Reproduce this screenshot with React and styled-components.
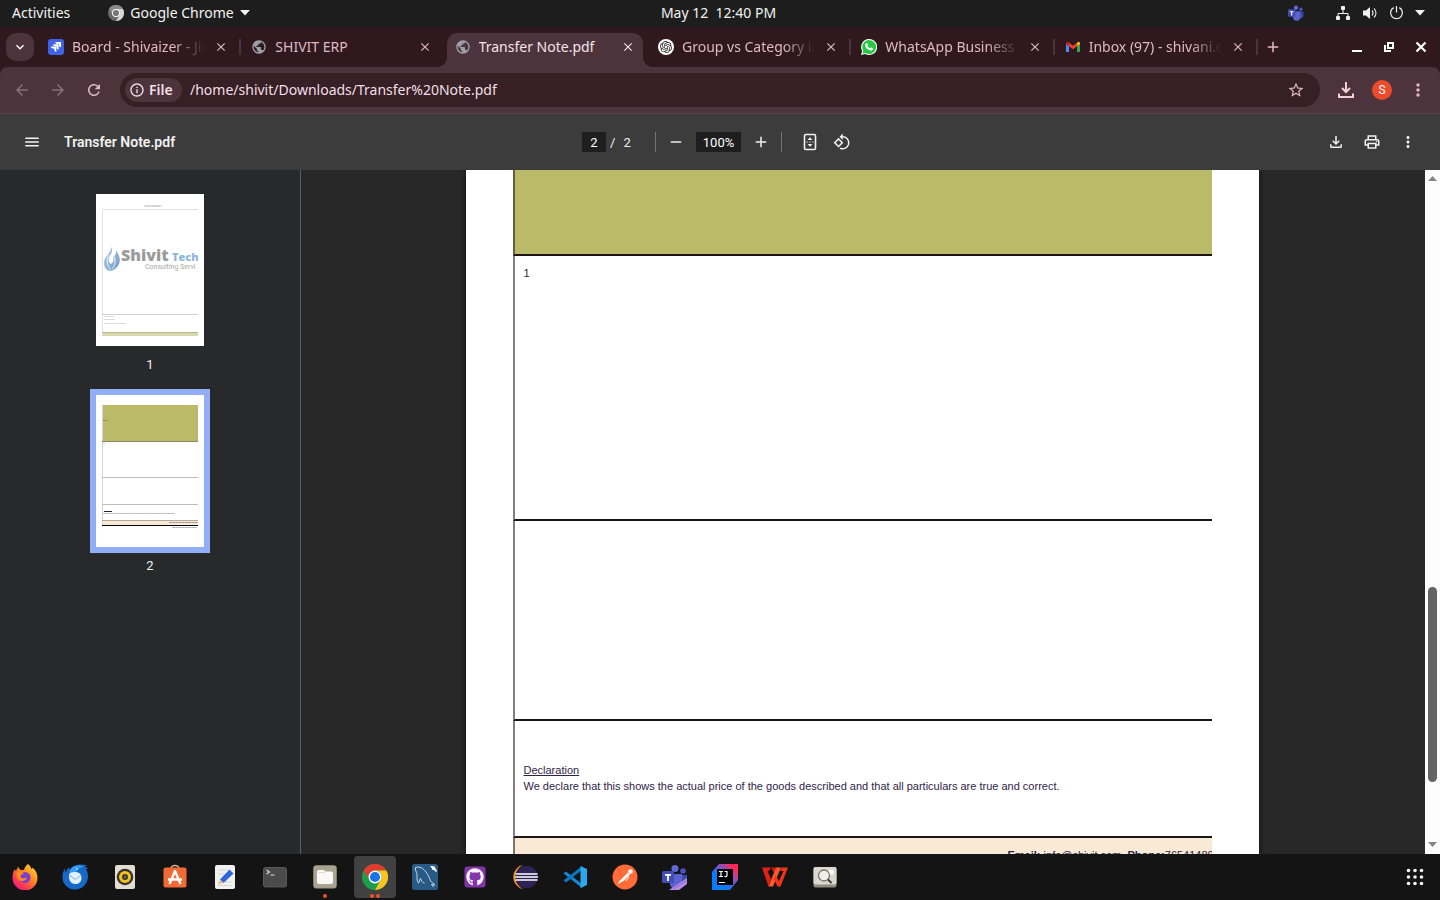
import React from 'react';
import styled, { createGlobalStyle } from 'styled-components';
import {
  MdMenu, MdRemove, MdAdd, MdMoreVert, MdOutlineFileDownload, MdOutlinePrint,
  MdRotate90DegreesCcw, MdArrowBack, MdArrowForward, MdRefresh, MdStarBorder,
  MdInfoOutline, MdClose, MdPublic, MdKeyboardArrowDown,
} from 'react-icons/md';
import { FaGithub } from 'react-icons/fa';
import { SiOpenai } from 'react-icons/si';

const c = {
  system: '#1d1d1d',
  strip: '#30181f',
  toolbar: '#4d343c',
  omnibox: '#361f25',
  pink: '#dfb9c3',
  pdfBar: '#3c3c3c',
  sidebar: '#28292b',
  canvas: '#282828',
  olive: '#bbba68',
  beige: '#f8ead5',
  ink: '#1c1419',
  text: '#30244a',
  dock: '#141414',
};

const GlobalStyle = createGlobalStyle`
  * { box-sizing: border-box; }
  body { margin: 0; background: ${c.dock}; }
  button, input {
    font: inherit; color: inherit; border: 0; padding: 0; margin: 0;
    background: transparent; outline: none; min-width: 0;
  }
  svg { display: block; flex: none; }
  h1, h2, p { margin: 0; font-weight: inherit; font-size: inherit; }
`;

const Desktop = styled.div`
  height: 100vh;
  display: flex;
  flex-direction: column;
  overflow: hidden;
  font-family: 'Noto Sans', 'Open Sans', sans-serif;
  font-size: 14px;
`;

/* ---------- system bar ---------- */
const SystemBar = styled.header`
  height: 27px;
  flex: none;
  display: grid;
  grid-template-columns: 1fr auto 1fr;
  align-items: center;
  padding: 0 15px 2px 12px;
  background: ${c.system};
  color: #f2f2f2;
`;
const SystemGroup = styled.div`
  display: flex;
  align-items: center;
  justify-content: ${(p) => (p.$end ? 'flex-end' : 'flex-start')};
  gap: ${(p) => p.$gap}px;
`;
const SystemButton = styled.button`
  display: flex;
  align-items: center;
  gap: 6px;
  white-space: pre;
`;
const TrayGap = styled.span`
  width: 9px;
`;

/* ---------- tabs ---------- */
const TabStrip = styled.nav`
  height: 40px;
  flex: none;
  display: flex;
  align-items: center;
  padding: 0 3px 0 6px;
  background: ${c.strip};
  color: ${c.pink};
`;
const TabSearch = styled.button`
  width: 28px;
  height: 28px;
  flex: none;
  margin-right: 6px;
  border-radius: 10px;
  background: ${c.toolbar};
  color: #fff;
  display: flex;
  align-items: center;
  justify-content: center;
`;
const TabCell = styled.div`
  flex: 1;
  min-width: 0;
  height: 40px;
  display: flex;
  align-items: center;
`;
const Tab = styled.div`
  position: relative;
  flex: 1;
  min-width: 0;
  display: flex;
  align-items: center;
  gap: 8px;
  padding: 0 7px 0 8px;
  height: ${(p) => (p.$active ? 34 : 28)}px;
  align-self: ${(p) => (p.$active ? 'flex-end' : 'center')};
  padding-bottom: ${(p) => (p.$active ? 6 : 0)}px;
  border-radius: 10px 10px 0 0;
  background: ${(p) => (p.$active ? c.toolbar : 'transparent')};
  color: ${(p) => (p.$active ? '#f4e3e8' : c.pink)};
  &::before, &::after {
    content: '';
    display: ${(p) => (p.$active ? 'block' : 'none')};
    position: absolute;
    bottom: 0;
    width: 10px;
    height: 10px;
  }
  &::before { left: -10px; background: radial-gradient(circle at 0 0, transparent 10px, ${c.toolbar} 10px); }
  &::after { right: -10px; background: radial-gradient(circle at 100% 0, transparent 10px, ${c.toolbar} 10px); }
`;
const TabTitle = styled.button`
  flex: 1;
  min-width: 0;
  overflow: hidden;
  white-space: nowrap;
  text-align: left;
  line-height: 20px;
  mask-image: ${(p) => (p.$fade ? 'linear-gradient(to right, #000 calc(100% - 32px), transparent)' : 'none')};
`;
const TabSeparator = styled.span`
  width: 2px;
  height: 16px;
  flex: none;
  margin: 0 2px 0 3px;
  background: ${(p) => (p.$hidden ? 'transparent' : c.toolbar)};
`;
const TabClose = styled.button`
  flex: none;
  width: 16px;
  height: 16px;
  display: flex;
  align-items: center;
  justify-content: center;
`;
const StripButton = styled.button`
  flex: none;
  width: ${(p) => (p.$window ? 32 : 26)}px;
  height: 28px;
  color: ${(p) => (p.$window ? '#fff' : 'inherit')};
  display: flex;
  align-items: center;
  justify-content: center;
`;
const WindowButtons = styled.div`
  display: flex;
  margin-left: 55px;
`;

/* ---------- browser toolbar ---------- */
const BrowserBarBack = styled.div`
  flex: none;
  background: ${c.strip};
`;
const BrowserBar = styled.div`
  height: 47px;
  display: flex;
  align-items: center;
  padding: 0 4px;
  background: ${c.toolbar};
  border-radius: 8px 8px 0 0;
  border-bottom: 1px solid #54484b;
  color: ${c.pink};
`;
const BarButton = styled.button`
  width: 36px;
  height: 34px;
  flex: none;
  display: flex;
  align-items: center;
  justify-content: center;
  color: ${(p) => (p.$faded ? '#86707a' : 'inherit')};
`;
const Omnibox = styled.div`
  flex: 1;
  height: 34px;
  display: flex;
  align-items: center;
  gap: 8px;
  margin: 0 8px;
  padding: 0 15px 0 5px;
  border-radius: 17px;
  background: ${c.omnibox};
`;
const SchemeChip = styled.button`
  height: 24px;
  width: 57px;
  flex: none;
  display: flex;
  align-items: center;
  gap: 4px;
  padding-left: 4px;
  border-radius: 12px;
  background: ${c.toolbar};
  color: #f4dfe5;
  font-weight: 600;
  line-height: 20px;
`;
const Address = styled.input`
  flex: 1;
  height: 22px;
  align-self: flex-start;
  margin-top: 5px;
  color: #f4dfe5;
`;
const Avatar = styled.span`
  width: 20px;
  height: 20px;
  border-radius: 50%;
  background: #ee4a2c;
  color: #fff;
  font: 12px/20px Roboto, sans-serif;
  text-align: center;
`;

/* ---------- pdf viewer ---------- */
const PdfBar = styled.div`
  height: 56px;
  flex: none;
  display: grid;
  grid-template-columns: 1fr auto 1fr;
  align-items: center;
  padding: 0 14px;
  background: ${c.pdfBar};
  color: #f1f1f1;
  font-family: Roboto, sans-serif;
`;
const PdfGroup = styled.div`
  display: flex;
  align-items: center;
  justify-content: ${(p) => (p.$end ? 'flex-end' : 'flex-start')};
`;
const PdfTitle = styled.h1`
  margin-left: 14px;
  font-weight: 600;
`;
const PdfButton = styled.button`
  width: ${(p) => p.$w || 36}px;
  height: 36px;
  display: flex;
  align-items: center;
  justify-content: center;
`;
const PdfField = styled.input`
  width: ${(p) => p.$w}px;
  height: 20px;
  background: #1e1e1e;
  color: #fff;
  font-size: 13px;
  text-align: center;
`;
const PageCount = styled.span`
  display: flex;
  gap: 8px;
  width: 49px;
  padding-left: 4px;
  font-size: 13px;
`;
const PdfDivider = styled.span`
  width: 1px;
  height: 20px;
  margin-right: ${(p) => p.$after || 0}px;
  background: #747474;
`;
const Viewer = styled.main`
  flex: 1;
  min-height: 0;
  display: flex;
`;
const Sidebar = styled.aside`
  width: 301px;
  flex: none;
  display: flex;
  flex-direction: column;
  align-items: center;
  padding-top: 24px;
  background: ${c.sidebar};
  border-right: 1px solid #5e5e5e;
  color: #f1f1f1;
  font: 13px/16px Roboto, sans-serif;
`;
const Thumb = styled.button`
  display: flex;
  flex-direction: column;
  align-items: center;
  margin-bottom: ${(p) => (p.$selected ? 0 : 16)}px;
  span { margin-top: ${(p) => (p.$selected ? 5 : 11)}px; }
`;
const ThumbFrame = styled.div`
  background: #fff;
  border: ${(p) => (p.$selected ? 6 : 0)}px solid #93aef9;
`;
const Canvas = styled.section`
  flex: 1;
  min-width: 0;
  display: flex;
  justify-content: center;
  padding-right: 2px;
  background: ${c.canvas};
  overflow: hidden;
`;
const Paper = styled.article`
  width: 793px;
  display: flex;
  padding: 0 47px;
  background: #fff;
  box-shadow: 0 0 6px rgba(0, 0, 0, 0.6);
  color: ${c.text};
  font: 11px/16px 'Liberation Sans', Arial, sans-serif;
`;
const PaperFrame = styled.div`
  flex: 1;
  min-width: 0;
  display: flex;
  flex-direction: column;
`;
const paperEdge = '2px solid rgba(28, 20, 25, 0.55)';
const PaperBlock = styled.section`
  flex: none;
  height: ${(p) => p.$h}px;
  padding: ${(p) => p.$top || 0}px 0 0 9px;
  border-left: ${paperEdge};
  border-bottom: 2px solid ${c.ink};
  background: ${(p) => p.$fill || 'transparent'};
`;
const Underlined = styled.h2`
  text-decoration: underline;
`;
const PaperFooter = styled.footer`
  flex: 1;
  min-height: 0;
  overflow: hidden;
  display: flex;
  justify-content: flex-end;
  padding-top: 9px;
  background: ${c.beige};
  border-left: ${paperEdge};
`;
const Contact = styled.p`
  width: 204px;
  overflow: hidden;
  white-space: nowrap;
`;
const ScrollTrack = styled.div`
  width: 15px;
  flex: none;
  display: flex;
  flex-direction: column;
  align-items: center;
  padding: 6px 0 7px;
  background: #fcfcfc;
`;
const ScrollSpace = styled.div`
  flex: ${(p) => p.$grow};
`;
const ScrollThumb = styled.div`
  flex: 195;
  width: 9px;
  border-radius: 5px;
  background: #636363;
`;

/* ---------- dock ---------- */
const Dock = styled.footer`
  height: 46px;
  flex: none;
  display: flex;
  align-items: center;
  gap: 8px;
  padding: 0 4px;
  background: ${c.dock};
`;
const DockItem = styled.button`
  position: relative;
  width: 42px;
  height: 42px;
  flex: none;
  display: flex;
  align-items: center;
  justify-content: center;
  border-radius: 4px;
  background: ${(p) => (p.$active ? '#414141' : 'transparent')};
  margin-left: ${(p) => (p.$last ? 'auto' : 0)};
`;
const RunDots = styled.span`
  position: absolute;
  left: 0;
  right: 0;
  bottom: 0;
  display: flex;
  justify-content: center;
  gap: 2px;
  i { width: 4px; height: 4px; border-radius: 50%; background: #e95420; }
`;

/* ---------- drawings ---------- */
const S = ({ s = 26, v = 26, children }) => (
  <svg width={s} height={s} viewBox={`0 0 ${v} ${v}`} aria-hidden="true">{children}</svg>
);
const Caret = () => (
  <svg width="10" height="6" viewBox="0 0 10 6" aria-hidden="true"><path d="M0 0h10L5 5.5z" fill="#f2f2f2" /></svg>
);
const Chrome = ({ s = 26, mono }) => {
  const k = mono ? ['#8a8a8a', '#d4d4d4', '#6b6b6b', '#777'] : ['#e33b2e', '#fcc31e', '#1e9e4a', '#1a73e8'];
  return (
    <S s={s} v={48}>
      <circle cx="24" cy="24" r="24" fill={k[2]} />
      <path d="M3.2 12A24 24 0 0 1 44.8 12H24a12 12 0 0 0-10.4 18z" fill={k[0]} />
      <path d="M44.8 12A24 24 0 0 1 24 48l10.4-18A12 12 0 0 0 24 12z" fill={k[1]} />
      <circle cx="24" cy="24" r="12" fill="#fff" />
      <circle cx="24" cy="24" r="9.3" fill={k[3]} />
    </S>
  );
};
const Jira = () => (
  <S s={16} v={16}>
    <rect width="16" height="16" rx="3" fill="#3f63e6" />
    <path d="M7.2 3H13v5.6a2.3 2.3 0 0 1-2-2.3V5H9.6A2.3 2.3 0 0 1 7.2 3zM5 5.3h5.6v5.5a2.3 2.3 0 0 1-2-2.3V7.3H7.3A2.2 2.2 0 0 1 5 5.3zM2.8 7.6h5.5V13a2.2 2.2 0 0 1-2-2.2V9.6H5A2.2 2.2 0 0 1 2.8 7.6z" fill="#fff" />
  </S>
);
const OpenAi = () => (
  <S s={16} v={16}>
    <circle cx="8" cy="8" r="8" fill="#fff" />
    <g transform="translate(2 2)" color="#222"><SiOpenai size={12} /></g>
  </S>
);
const WhatsApp = () => (
  <S s={16} v={16}>
    <path d="M8 0a8 8 0 1 1-3.7 15L0 16l1.1-4.1A8 8 0 0 1 8 0z" fill="#fff" />
    <path d="M8 1a7 7 0 1 1-3.5 13L1.5 14.7l.8-3A7 7 0 0 1 8 1z" fill="#25c943" />
    <path d="M5.2 4.2c.5-.5 1-.3 1.2.2l.5 1.2c.1.4-.6.9-.5 1.2.6 1.2 1.5 2 2.7 2.5.4.1.9-.9 1.3-.7l1.3.7c.4.2.2 1.3-.3 1.7-1 .9-2.6.6-4.2-.4C5.5 9.5 4 7.600 4.200 6c.1-.8.5-1.300 1-1.800z" fill="#fff" />
  </S>
);
const Gmail = () => (
  <S s={16} v={16}>
    <path d="M1 4.5v8.5h3V7.2z" fill="#4c8bf5" />
    <path d="M15 4.5v8.5h-3V7.2z" fill="#2fa84f" />
    <path d="M12 7.2V3.7l1-.7a1.3 1.3 0 0 1 2 1v1z" fill="#fbbc05" />
    <path d="M1 5V4a1.3 1.3 0 0 1 2-1l1 .7v3.5z" fill="#c5221f" />
    <path d="M4 3.7l4 3 4-3v3.5l-4 3-4-3z" fill="#ea4335" />
  </S>
);
const Teams = ({ s = 26, badge }) => (
  <S s={s} v={26}>
    <circle cx="21" cy="7" r="2.8" fill="#4b53bc" />
    <path d="M18 11h7v7a4 4 0 0 1-6 3z" fill="#3f48ad" />
    <circle cx="13" cy="4.5" r="3.5" fill="#6169d6" />
    <path d="M8 10h12v9a6 6 0 0 1-12 1z" fill="#5a63cf" />
    <rect x="0" y="7" width="12" height="12" rx="1.5" fill="#434bb5" />
    <path d="M3 10h6v1.7H6.9V17H5.1v-5.3H3z" fill="#fff" />
    {badge && <path d="M7 26L25 14v6l-8 6z" fill="#b58be8" />}
    {badge && <path d="M12 24.5L24 17" stroke="#8a5fc9" strokeWidth="1.3" strokeDasharray="1.5 1" />}
  </S>
);
const Network = () => (
  <S s={16} v={16}>
    <rect x="6" y="1" width="4" height="4" rx="1" fill="#f2f2f2" />
    <rect x="1" y="11" width="4" height="4" rx="1" fill="#f2f2f2" />
    <rect x="11" y="11" width="4" height="4" rx="1" fill="#f2f2f2" />
    <path d="M8 5v3.500M3 11V8.500h10V11" fill="none" stroke="#f2f2f2" />
  </S>
);
const Volume = () => (
  <S s={16} v={16}><path d="M1 5.5h3L8 2v12l-4-3.500H1z" fill="#f2f2f2" /><path d="M10 5.500c1.300 1.500 1.300 3.500 0 5M12 3.500c2.600 2.500 2.600 6.500 0 9" fill="none" stroke="#d8d8d8" strokeWidth="1.2" /></S>
);
const Power = () => (
  <S s={15} v={16}><path d="M5 2.8a6.3 6.3 0 1 0 6 0M8 1v7" fill="none" stroke="#f2f2f2" strokeWidth="1.3" /></S>
);
const Fit = () => (
  <S s={20} v={20}>
    <rect x="4.5" y="2.5" width="11" height="15" rx="1.3" fill="none" stroke="#f1f1f1" strokeWidth="1.6" />
    <path d="M7.5 8L10 5.3 12.5 8zM7.5 12L10 14.7 12.5 12z" fill="#f1f1f1" />
    <path d="M6.5 10h1.2M9.4 10h1.2M12.3 10h1.2" stroke="#f1f1f1" />
  </S>
);
const TrayDownload = () => (
  <S s={18} v={18}><path d="M9 1v9.500M5 7l4 4 4-4M2 12.500V16h14v-3.500" fill="none" stroke="#f6cfd5" strokeWidth="2" /></S>
);
const Firefox = () => (
  <S>
    <defs>
      <linearGradient id="ff" x1="1" y1="0" x2=".2" y2="1"><stop offset="0" stopColor="#ffe83a" /><stop offset=".45" stopColor="#ff8a1c" /><stop offset=".8" stopColor="#ff3556" /><stop offset="1" stopColor="#e3148c" /></linearGradient>
    </defs>
    <path d="M16 0c2 2 3 3 3.500 5 1-.5 1-1 1-1.500 3 2.500 5 6 5 10.500A12.500 12.500 0 0 1 .5 14C.3 10 1.500 7 3 5c0 .8.200 1.500.5 2C5 5.500 5.500 4 6 2.500c.5 1.500 1.500 2.800 3 3.500h3c.5-2.500 2-4.500 4-6z" fill="url(#ff)" />
    <circle cx="13" cy="13.500" r="5.500" fill="#7a3fd0" />
    <path d="M5 8c3-1 5 0 7 1.500-1.500 1-3 1-3.500 2.500-.3 1.500 1 2.500 3 2.500s2-1 3.500-1c-1 3-4 4-7 3-2.500-1-4-4-3-8.500z" fill="#ff8f1d" />
  </S>
);
const Thunderbird = () => (
  <S>
    <path d="M8 5c3-4 10-5.500 17-3.500l-2.500 1c1.500.5 2.500 1.500 3.500 2.500h-2c2.500 4 2.500 9.500.5 13.500C22 23.500 17 26 12 25.500 5 25 0 19 .5 12c.2-3 1-5.500 2.500-7.500 0 2 .2 3 .7 4L6.500 3c0 1.500.5 1.500 1.500 2z" fill="#1769c9" />
    <path d="M10 4c3-3 8-3 11.500-1-4 .2-6.500 2-7.500 5l-6 3C7 8 8 6 10 4z" fill="#3a9df0" />
    <path d="M7 11c0-2 3-3 6-3 4 0 6.500 2 6.500 6s-3 6-6 6c-4 0-7-3-6.500-9z" fill="#e4f1ff" />
    <path d="M7.500 11l5.500 4.500 6-4" fill="none" stroke="#9cc5ee" strokeWidth="1.2" />
    <circle cx="15" cy="5" r=".8" fill="#fff" />
  </S>
);
const Rhythmbox = () => (
  <S>
    <rect x="3" y="1" width="20" height="24" rx="2" fill="#e2ded2" />
    <circle cx="13" cy="13" r="8.3" fill="#35332f" /><circle cx="13" cy="13" r="6" fill="#f3c21b" /><circle cx="13" cy="13" r="3" fill="#333" /><circle cx="13" cy="13" r="1.5" fill="#6b6452" />
  </S>
);
const Software = () => (
  <S>
    <path d="M8.500 6c0-6 9-6 9 0" fill="none" stroke="#d9b18b" strokeWidth="1.5" />
    <rect x="1.5" y="3.5" width="23" height="20" rx="2" fill="#f26a35" />
    <path d="M7.500 20L13 7l5.500 13M6 15.500h14" fill="none" stroke="#fff" strokeWidth="2.3" strokeLinejoin="round" />
  </S>
);
const Editor = () => (
  <S>
    <rect x="3" y="1" width="20" height="24" rx="2" fill="#f1f1f1" />
    <path d="M6 6h10M6 10h7M6 18h14M6 21.500h14" stroke="#d7d7d7" />
    <path d="M8 15.500L17.500 5.500l4 4L11.500 19z" fill="#2f66dc" /><path d="M8 15.500l3.500 3.500L6 20.500z" fill="#e8bd8b" />
  </S>
);
const Terminal = () => (
  <S>
    <rect x="1.5" y="3.5" width="23" height="19.5" rx="2" fill="#4b4b4b" stroke="#6a6a6a" strokeWidth=".7" />
    <path d="M4.500 6l3 2-3 2M8.500 11h4" fill="none" stroke="#ddd" strokeWidth="1.1" />
  </S>
);
const Files = () => (
  <S>
    <rect x="1.5" y="1.5" width="23" height="23" rx="2.5" fill="#9c9584" /><rect x="1.5" y="1.5" width="23" height="22" rx="2.5" fill="#aaa392" />
    <path d="M5 8a2 2 0 0 1 2-2h5l1 1.500h6a2 2 0 0 1 2 2V18a2 2 0 0 1-2 2H7a2 2 0 0 1-2-2z" fill="#faf9f6" /><path d="M6 8.500h7" stroke="#ddd" />
  </S>
);
const Workbench = () => (
  <S>
    <rect width="26" height="26" rx="2.5" fill="#275a85" />
    <path d="M3.500 3.500c4-1.500 8 1 10.500 4.500 2.500 3.500 3.500 6 4.500 9l4.500 4-3.500-.5 2 2.500M3.500 3.500C2.500 6 5 8 5 10.500s-.5 6 1.500 8.500c1.500-.5.500-3 2-4.500 1 2 2 4.500 4 4.500" fill="none" stroke="#dbe7f0" strokeWidth=".9" />
    <path d="M18 2l2 2.500L20.500 6 22 6l2 2 1-1-1.500-2.500-1-2L20 2z" fill="#fff" />
  </S>
);
const GitHubDesktop = () => (
  <S>
    <rect x="2.5" y="2.5" width="21" height="21" rx="3" fill="#8334a9" />
    <g transform="translate(4 4)" color="#f4f0f7"><FaGithub size={18} /></g>
  </S>
);
const Eclipse = () => (
  <S>
    <path d="M11 .8a12.500 12.500 0 0 0 0 24.400 14 14 0 0 1 0-24.400z" fill="#f7941e" />
    <circle cx="14.5" cy="13" r="11.3" fill="#2c2255" />
    <path d="M3.500 10h22M3 13h23M3.500 16h22" stroke="#fff" strokeWidth="1.6" />
  </S>
);
const VsCode = () => (
  <S>
    <path d="M1.500 9.500L4 7.500 20 20v4z" fill="#1387d0" />
    <path d="M1.500 16.500L4 18.500 20 6V2z" fill="#0a78bf" />
    <path d="M18.500 2L25 5v16l-6.500 3z" fill="#2aa7ee" />
  </S>
);
const Postman = () => (
  <S>
    <circle cx="13" cy="13" r="12.5" fill="#ff6c37" />
    <circle cx="18.500" cy="7.500" r="2.300" fill="#fff" />
    <path d="M16 8.500l2 2-6 6-6.500 4 2-3.500z" fill="#fff" /><path d="M15.500 12l1 2-3 3" fill="none" stroke="#fff" />
  </S>
);
const Idea = () => (
  <S>
    <defs><linearGradient id="ij" x1="0" y1="1" x2="1" y2="0"><stop offset=".35" stopColor="#087cfa" /><stop offset=".6" stopColor="#7a55c9" /><stop offset=".85" stopColor="#fe2857" /></linearGradient></defs>
    <path d="M7 0h19v16l-8 10H0V8z" fill="url(#ij)" />
    <rect x="5" y="5" width="16" height="16" fill="#000" />
    <path d="M7 7.500h4M9 7.500v5M7 12.500h4M12.500 7.500H15v4c0 1.200-1.500 1.500-2.500.8M7 18.500h6" fill="none" stroke="#fff" strokeWidth="1.2" />
  </S>
);
const Wps = () => (
  <S>
    <path d="M0 3.500h9l-2 3.500H5.500L9 15l-2.500 7.500z" fill="#e12016" />
    <path d="M9 3.500h5l1 3.500-2 4z" fill="#c81811" />
    <path d="M6.500 22.500L14 3.500h5L11 22.500z" fill="#ff5a2b" />
    <path d="M13.500 11l3.500 6L21.500 7H18l1.500-3.500H26L18.500 22.500h-3L12 15z" fill="#f03419" />
  </S>
);
const ImageViewer = () => (
  <S>
    <rect x="1.5" y="3" width="23" height="20.5" rx="2" fill="#8e8c83" /><rect x="1.5" y="3" width="23" height="17.5" rx="2" fill="#d9d8cf" />
    <circle cx="19" cy="8" r="2.6" fill="#fff" />
    <circle cx="12" cy="11.5" r="5.5" fill="#efefea" stroke="#77766e" strokeWidth="1.3" /><path d="M16 15.500l3.500 3.500" stroke="#333" strokeWidth="1.8" />
  </S>
);
const AppGrid = () => (
  <S s={18} v={18}>
    {[2.5, 9, 15.5].flatMap((y) => [2.5, 9, 15.5].map((x) => <circle key={`${x}-${y}`} cx={x} cy={y} r="1.8" fill="#f2f2f2" />))}
  </S>
);

const ThumbOne = () => (
  <svg width="108" height="152" viewBox="0 0 108 152" aria-hidden="true">
    <defs>
      <clipPath id="sheet"><rect x="6" y="0" width="96" height="152" /></clipPath>
      <linearGradient id="flame" x1="0" y1="0" x2="1" y2="1"><stop offset="0" stopColor="#b5d3f0" /><stop offset="1" stopColor="#6f97c6" /></linearGradient>
    </defs>
    <path d="M48.500 12h17" stroke="#aaa" strokeWidth="1.2" strokeDasharray="3 .3" />
    <path d="M6.500 142V15.500H102" fill="none" stroke="#e2e2e2" />
    <path d="M15 53c2 3 1 5 0 7-3 4-3 8 0 10 3-2 3-5 2-7 3-2 3-4 3-7 3 5 5 9 3 14-2 4-5 6-8 7-4 0-7-3-7-8s4-8 5-10 2-3 2-6z" fill="url(#flame)" />
    <path d="M13 61c-3 5-2 11 2 15M17 60c3 5 3 11-1 15" fill="none" stroke="#fff" strokeWidth=".8" />
    <g clipPath="url(#sheet)">
      <text x="25" y="67" fontFamily="Open Sans, sans-serif" fontWeight="800" fontSize="16" fill="#9b9b9b">Shivit</text>
      <text x="76" y="67" fontFamily="Open Sans, sans-serif" fontWeight="800" fontSize="11" fill="#91b6dc">Tech</text>
      <text x="49" y="75" fontFamily="Roboto, sans-serif" fontSize="7" fill="#a3aba5">Consulting Servi</text>
    </g>
    <path d="M6 120.500h96" stroke="#d2d2d2" />
    <path d="M8 122.500h10M8 125.500h11M8 129.500h22" stroke="#c9c9c9" strokeWidth=".7" strokeDasharray="3 .2" />
    <rect x="7" y="138" width="95" height="4" fill="#d8d8ae" /><path d="M6 138.500h96" stroke="#b5b48a" />
  </svg>
);
const ThumbTwo = () => (
  <svg width="108" height="152" viewBox="0 0 108 152" aria-hidden="true">
    <rect x="7" y="10" width="95" height="37" fill={c.olive} />
    <path d="M6.500 10v121" stroke="#d5d5d5" />
    <path d="M7 25.500h5" stroke="#86855c" strokeDasharray="2 .5" />
    <path d="M6 46.500h96" stroke="#8a8664" />
    <path d="M7 48.500h2" stroke="#ccc" />
    <path d="M6 82.500h96M6 109.500h96" stroke="#bdbdbd" />
    <path d="M8 116.500h8" stroke="#2a2340" />
    <path d="M7 118.500h72" stroke="#bdbdc8" strokeDasharray="3 .2" />
    <rect x="7" y="126" width="95" height="4" fill={c.beige} /><path d="M6 125.500h96" stroke="#b6a79b" />
    <path d="M73 127.500h29" stroke="#a2979d" strokeDasharray="3 .2" />
    <path d="M6 130.500h96" stroke="#000" />
    <path d="M76 132.500h25" stroke="#b5b5c0" strokeDasharray="3 .2" />
  </svg>
);

const tabs = [
  { title: 'Board - Shivaizer - Jira', icon: <Jira />, fade: true },
  { title: 'SHIVIT ERP', icon: <MdPublic size={16} color="#9aa0a6" />, noSep: true },
  { title: 'Transfer Note.pdf', icon: <MdPublic size={16} color="#9aa0a6" />, active: true, noSep: true },
  { title: 'Group vs Category in', icon: <OpenAi />, fade: true },
  { title: 'WhatsApp Business', icon: <WhatsApp />, fade: true },
  { title: 'Inbox (97) - shivani.c', icon: <Gmail />, fade: true },
];

const dockApps = [
  ['Firefox', <Firefox />], ['Thunderbird', <Thunderbird />], ['Rhythmbox', <Rhythmbox />],
  ['Software', <Software />], ['Text Editor', <Editor />], ['Terminal', <Terminal />],
  ['Files', <Files />, 1], ['Google Chrome', <Chrome />, 2], ['MySQL Workbench', <Workbench />],
  ['GitHub Desktop', <GitHubDesktop />], ['Eclipse', <Eclipse />], ['VS Code', <VsCode />],
  ['Postman', <Postman />], ['Teams', <Teams badge />], ['IntelliJ IDEA', <Idea />],
  ['WPS Office', <Wps />], ['Image Viewer', <ImageViewer />],
];

export default function App() {
  return (
    <Desktop>
      <GlobalStyle />
      <SystemBar>
        <SystemGroup $gap={38}>
          <SystemButton>Activities</SystemButton>
          <SystemButton><Chrome s={16} mono />Google Chrome<Caret /></SystemButton>
        </SystemGroup>
        <SystemButton>{'May 12  12:40 PM'}</SystemButton>
        <SystemGroup $end $gap={11}>
          <SystemButton aria-label="Teams"><Teams s={16} /></SystemButton>
          <TrayGap />
          <SystemButton aria-label="Network"><Network /></SystemButton>
          <SystemButton aria-label="Volume"><Volume /></SystemButton>
          <SystemButton aria-label="Power"><Power /></SystemButton>
          <Caret />
        </SystemGroup>
      </SystemBar>

      <TabStrip>
        <TabSearch aria-label="Search tabs"><MdKeyboardArrowDown size={16} /></TabSearch>
        {tabs.map((t) => (
          <TabCell key={t.title}>
            <Tab $active={t.active}>
              {t.icon}
              <TabTitle $fade={t.fade}>{t.title}</TabTitle>
              <TabClose aria-label={`Close ${t.title}`}><MdClose size={14} /></TabClose>
            </Tab>
            <TabSeparator $hidden={t.noSep} />
          </TabCell>
        ))}
        <StripButton aria-label="New tab"><MdAdd size={18} /></StripButton>
        <WindowButtons>
          <StripButton $window aria-label="Minimize"><S s={12} v={12}><path d="M1 10h10" stroke="#fff" strokeWidth="2" /></S></StripButton>
          <StripButton $window aria-label="Restore"><S s={12} v={12}><path d="M5 2h5v5H5zM2 4v6h6" fill="none" stroke="#fff" strokeWidth="2" /></S></StripButton>
          <StripButton $window aria-label="Close window"><S s={12} v={12}><path d="M1.500 1.500l9 9M10.500 1.500l-9 9" stroke="#fff" strokeWidth="2.2" /></S></StripButton>
        </WindowButtons>
      </TabStrip>

      <BrowserBarBack>
        <BrowserBar>
          <BarButton $faded aria-label="Back"><MdArrowBack size={18} /></BarButton>
          <BarButton $faded aria-label="Forward"><MdArrowForward size={18} /></BarButton>
          <BarButton aria-label="Reload"><MdRefresh size={18} /></BarButton>
          <Omnibox>
            <SchemeChip><MdInfoOutline size={16} />File</SchemeChip>
            <Address aria-label="Address" defaultValue="/home/shivit/Downloads/Transfer%20Note.pdf" />
            <MdStarBorder size={18} />
          </Omnibox>
          <BarButton aria-label="Downloads"><TrayDownload /></BarButton>
          <BarButton aria-label="Profile"><Avatar>S</Avatar></BarButton>
          <BarButton aria-label="Browser menu"><MdMoreVert size={20} /></BarButton>
        </BrowserBar>
      </BrowserBarBack>

      <PdfBar>
        <PdfGroup>
          <PdfButton aria-label="Menu"><MdMenu size={18} /></PdfButton>
          <PdfTitle>Transfer Note.pdf</PdfTitle>
        </PdfGroup>
        <PdfGroup>
          <PdfField $w={24} aria-label="Page number" defaultValue="2" />
          <PageCount><span>/</span><span>2</span></PageCount>
          <PdfDivider />
          <PdfButton $w={40} aria-label="Zoom out"><MdRemove size={18} /></PdfButton>
          <PdfField $w={45} aria-label="Zoom level" defaultValue="100%" />
          <PdfButton $w={40} aria-label="Zoom in"><MdAdd size={18} /></PdfButton>
          <PdfDivider $after={12} />
          <PdfButton $w={32} aria-label="Fit to page"><Fit /></PdfButton>
          <PdfButton $w={32} aria-label="Rotate"><MdRotate90DegreesCcw size={18} /></PdfButton>
        </PdfGroup>
        <PdfGroup $end>
          <PdfButton aria-label="Download"><MdOutlineFileDownload size={18} /></PdfButton>
          <PdfButton aria-label="Print"><MdOutlinePrint size={18} /></PdfButton>
          <PdfButton aria-label="More actions"><MdMoreVert size={18} /></PdfButton>
        </PdfGroup>
      </PdfBar>

      <Viewer>
        <Sidebar>
          <Thumb>
            <ThumbFrame><ThumbOne /></ThumbFrame>
            <span>1</span>
          </Thumb>
          <Thumb $selected>
            <ThumbFrame $selected><ThumbTwo /></ThumbFrame>
            <span>2</span>
          </Thumb>
        </Sidebar>
        <Canvas>
          <Paper>
            <PaperFrame>
              <PaperBlock $h={86} $fill={c.olive} />
              <PaperBlock $h={265} $top={9}><p>1</p></PaperBlock>
              <PaperBlock $h={200} />
              <PaperBlock $h={117} $top={41}>
                <Underlined>Declaration</Underlined>
                <p>We declare that this shows the actual price of the goods described and that all particulars are true and correct.</p>
              </PaperBlock>
              <PaperFooter>
                <Contact><b>Email:</b> info@shivit.com, <b>Phone:</b>7654148989</Contact>
              </PaperFooter>
            </PaperFrame>
          </Paper>
        </Canvas>
        <ScrollTrack>
          <svg width="9" height="5" viewBox="0 0 9 5" aria-hidden="true"><path d="M0 5h9L4.500 0z" fill="#858585" /></svg>
          <ScrollSpace $grow={406} />
          <ScrollThumb />
          <ScrollSpace $grow={60} />
          <svg width="9" height="5" viewBox="0 0 9 5" aria-hidden="true"><path d="M0 0h9L4.500 5z" fill="#858585" /></svg>
        </ScrollTrack>
      </Viewer>

      <Dock>
        {dockApps.map(([name, icon, running]) => (
          <DockItem key={name} aria-label={name} $active={running === 2}>
            {icon}
            {running && <RunDots>{Array.from({ length: running }, (_, i) => <i key={i} />)}</RunDots>}
          </DockItem>
        ))}
        <DockItem $last aria-label="Show applications"><AppGrid /></DockItem>
      </Dock>
    </Desktop>
  );
}
